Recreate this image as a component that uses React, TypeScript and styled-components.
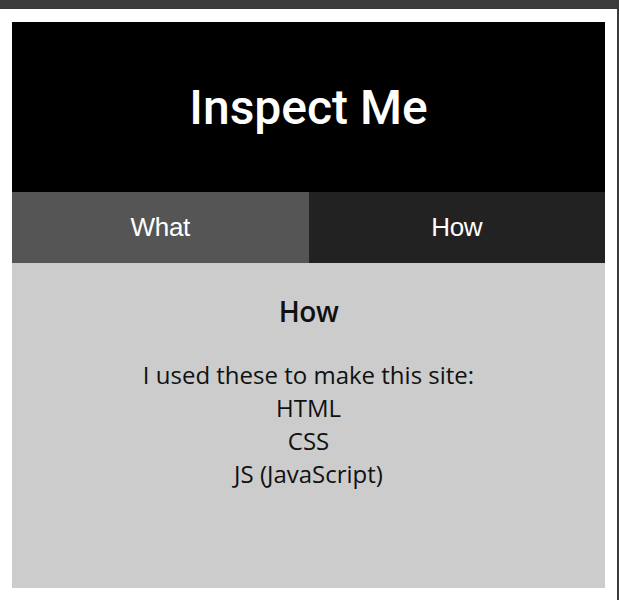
import styled, { createGlobalStyle } from 'styled-components';

const GlobalStyle = createGlobalStyle`
  html, body {
    margin: 0;
    padding: 0;
    background: #ffffff;
  }
`;

const Frame = styled.div`
  box-sizing: border-box;
  width: 619px;
  height: 600px;
  border-top: 9px solid #3c3c3c;
  border-right: 2px solid #3a3a3a;
  padding: 13px 12px 12px 12px;
  background: #ffffff;
`;

const Card = styled.div`
  display: flex;
  flex-direction: column;
  height: 100%;
`;

const Header = styled.header`
  height: 170px;
  background: #000000;
  display: flex;
  align-items: center;
  justify-content: center;
`;

const Title = styled.h1`
  margin: 0;
  color: #ffffff;
  font-family: Roboto, 'Liberation Sans', sans-serif;
  font-weight: 500;
  font-size: 48px;
`;

const Tabs = styled.nav`
  display: grid;
  grid-template-columns: 1fr 1fr;
  height: 71px;
`;

const Tab = styled.div<{ $active?: boolean }>`
  display: flex;
  align-items: center;
  justify-content: center;
  background: ${(p) => (p.$active ? '#222222' : '#555555')};
  color: #ffffff;
  font-family: 'Liberation Sans', Arial, sans-serif;
  font-size: 26px;
  letter-spacing: -0.3px;
`;

const Panel = styled.section`
  flex: 1;
  background: #cccccc;
  padding-top: 29px;
  text-align: center;
  color: #111111;
  font-family: 'Open Sans', sans-serif;
`;

const Heading = styled.h3`
  margin: 0 0 28px 0;
  font-size: 28px;
  font-weight: 600;
  letter-spacing: -0.5px;
`;

const Body = styled.p`
  margin: 0;
  font-size: 24px;
`;

export default function App() {
  return (
    <>
      <GlobalStyle />
      <Frame>
        <Card>
          <Header>
            <Title>Inspect Me</Title>
          </Header>
          <Tabs>
            <Tab>What</Tab>
            <Tab $active>How</Tab>
          </Tabs>
          <Panel>
            <Heading>How</Heading>
            <Body>
              I used these to make this site:
              <br />
              HTML
              <br />
              CSS
              <br />
              JS (JavaScript)
            </Body>
          </Panel>
        </Card>
      </Frame>
    </>
  );
}
